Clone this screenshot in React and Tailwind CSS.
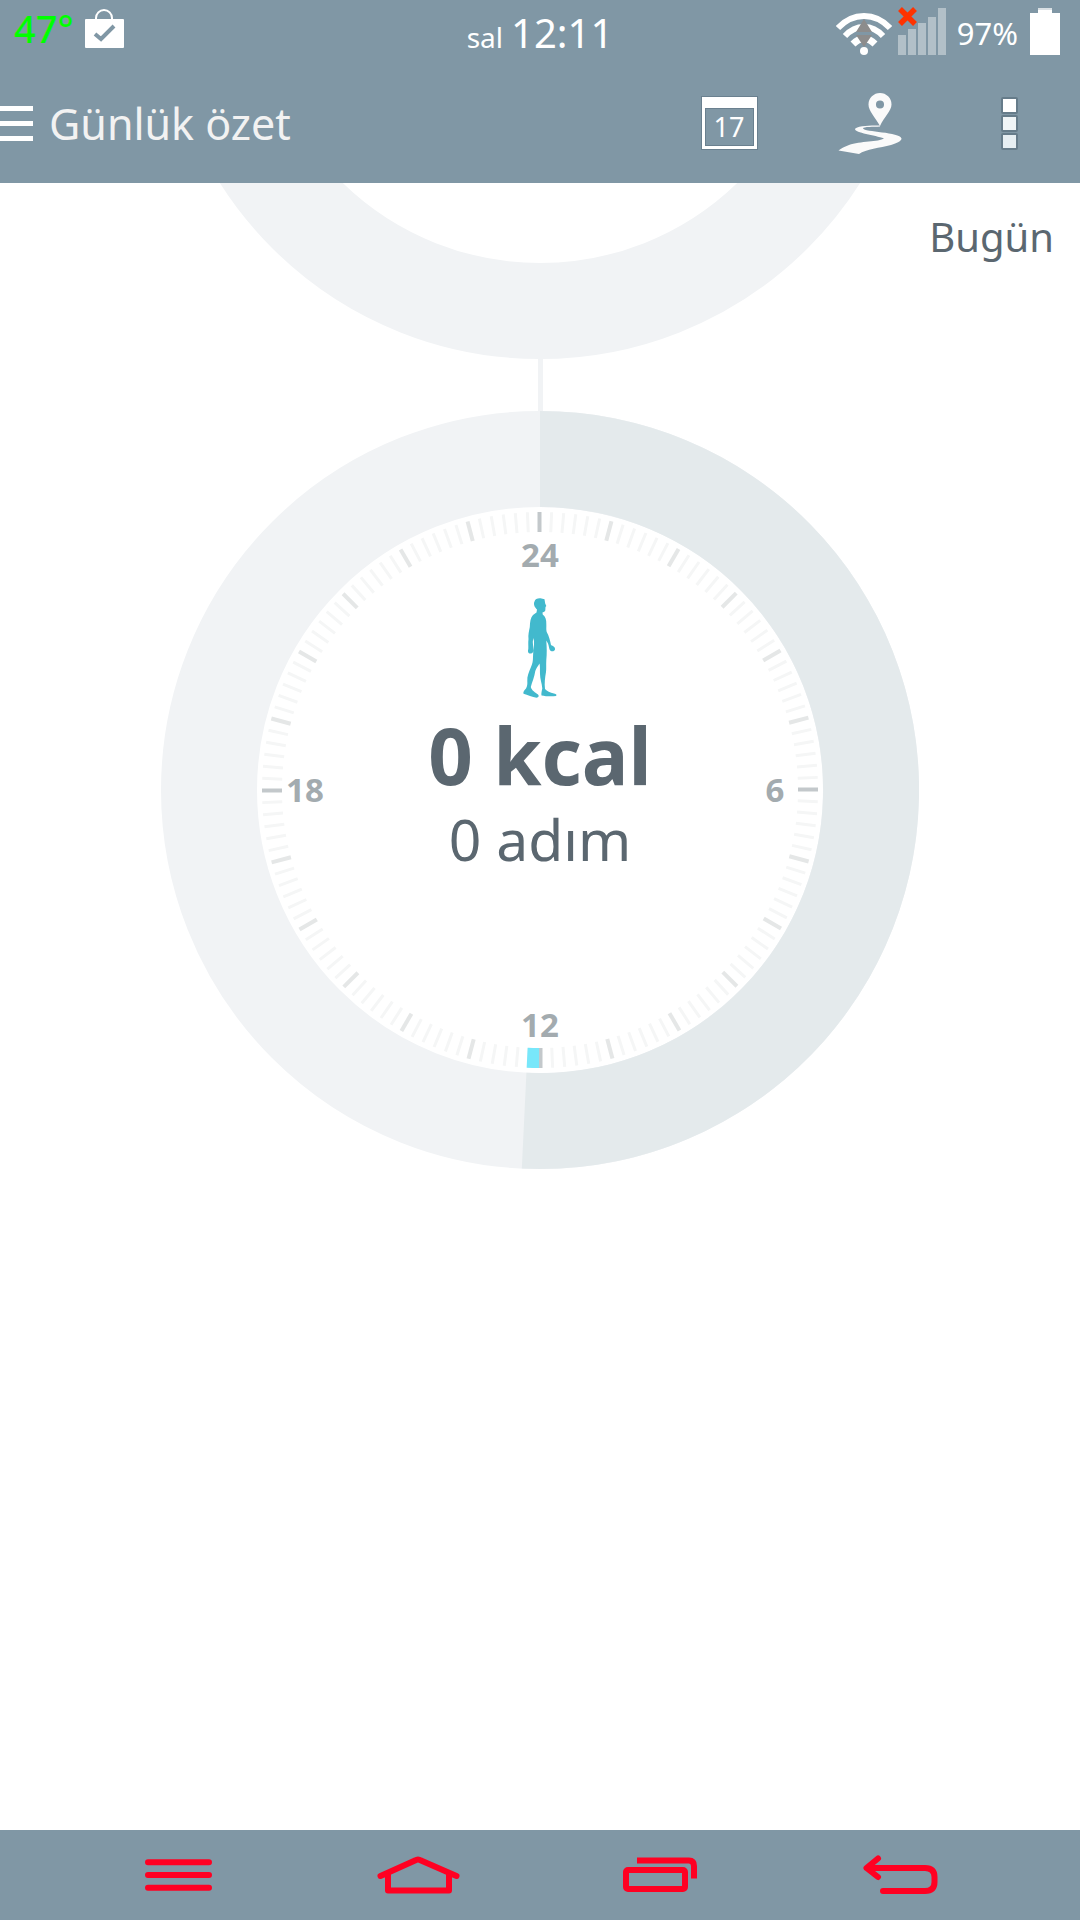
import React from 'react';

const RADIUS = 379;
const INNER = 283;
const ticks = Array.from({ length: 144 }, (_, i) => i);

const point = (radius, deg) => {
   const rad = (deg * Math.PI) / 180;
   return `${(379 + radius * Math.sin(rad)).toFixed(2)} ${(379 - radius * Math.cos(rad)).toFixed(2)}`;
};

// ring segment running clockwise between two angles, 0 is at the top
const segment = (outer, inner, from, to) => {
   const large = to - from > 180 ? 1 : 0;
   return `M${point(outer, from)} A${outer} ${outer} 0 ${large} 1 ${point(outer, to)} L${point(inner, to)} A${inner} ${inner} 0 ${large} 0 ${point(inner, from)} Z`;
};

const tickColor = (i) => {
   if (i % 36 === 0) return '#c3c8cb';
   if (i % 6 === 0) return '#e5e7e7';
   return '#f5f6f6';
};

const Walker = () => (
   <svg viewBox="0 0 80 130" className="h-[130px] w-20" fill="#42b9cd" aria-hidden="true">
      <path d="M34.500 21.500C35 19 37.500 18 40.500 18.200L44.500 19.300L45.200 23.500L46.300 26L45.500 27L45.300 30.500C44.500 32 43 32 42.500 32.500L42.700 34.500C45.500 36.500 46.500 40 46.300 43.500C46.500 47 46 49.500 46.700 52C49 56 50 60 51 65C53 66 55.500 67 55 69.500C54.500 71.700 51 72 49.800 70C48.800 67.500 49 66 48 63.500L46.300 60.500C46.800 67 47 74 46.300 80C46 85 46.500 88 46 92C45 98 44.300 103 45 109C47 111.500 50 112.500 54 113.500C56.500 114 57 115 56 116C52 116.600 46 116.400 41.500 115.500C41 113.500 41.800 111 42.300 108.500C41.800 103 40 99 40 94C39.800 90 40.300 87 39.500 83.500C38 86 36 88.500 35.300 91C34.500 97 32 102 30.800 107C31.500 110.500 35.500 112.500 38 114.500C39.300 115.800 38.800 117.500 36.500 117.700C32.500 117.500 27.500 114.500 23.500 113.800C22.800 112 24.500 110 26 108.500C27.300 106 27.500 104 27.300 101C27 96.500 28.800 92 31 87C32.500 83.500 33 81 33 77C33 71 34.300 66 34 61L33.200 58L32.800 62L33.300 69C33.800 72 32.500 73.700 30.500 73.500C28 73.500 27.600 71.500 28.300 69C28.500 66 28 63 28.500 59C28 55 29 51 29.800 47C30 42 30.500 37.500 33 35L36.500 32.500L37 29.500C35 27.500 33 24.500 34.500 21.500Z" />
   </svg>
);

const Dial = ({ progress, activeFrom, activeTo, children }) => (
   <section className="relative h-[758px] w-[758px] shrink-0">
      <svg viewBox="0 0 758 758" className="h-full w-full">
         <circle cx="379" cy="379" r={(RADIUS + INNER) / 2} fill="none" stroke="#f1f3f5" strokeWidth={RADIUS - INNER} />
         {progress && (
            <>
               <path d={segment(RADIUS, INNER, 0, progress)} fill="#e4eaec" />
               {ticks.map((i) => (
                  <line
                     key={i}
                     x1="378.500" y1="101" x2="378.500" y2="121"
                     stroke={tickColor(i)}
                     strokeWidth={i % 6 === 0 ? 4 : 3}
                     transform={`rotate(${i * 2.5} 379 379)`}
                  />
               ))}
               <path d={segment(278, 258, activeFrom, activeTo)} fill="#78e7fa" />
               <g fill="#a3abaf" className="font-['Noto_Sans'] text-[33px] font-bold" textAnchor="middle">
                  <text x="379" y="156">24</text>
                  <text x="614" y="391">6</text>
                  <text x="379" y="626">12</text>
                  <text x="144" y="391">18</text>
               </g>
            </>
         )}
      </svg>
      {children}
   </section>
);

const StatusBar = () => (
   <div className="grid h-[63px] grid-cols-[1fr_auto_1fr] items-start text-white">
      <div className="flex items-start gap-2 pl-[14px]">
         <span className="w-[62px] text-[38px] leading-[56px] font-medium text-[#00ff00]">47°</span>
         <svg viewBox="0 0 40 40" className="mt-[9px] h-10 w-10" fill="none">
            <path d="M12 11V9a8 8 0 0 1 16 0v2" stroke="#fff" strokeWidth="2" />
            <rect x="1" y="10" width="39" height="29" rx="1" fill="#fff" />
            <path d="M11 25l6 5 13-13" stroke="#8097a5" strokeWidth="4" />
         </svg>
      </div>
      <div className="flex items-baseline gap-2 leading-[66px]">
         <span className="text-[28px]">sal</span>
         <span className="text-[40px]">12:11</span>
      </div>
      <div className="flex items-start justify-end pr-5">
         <svg viewBox="0 0 56 56" className="h-14 w-14" fill="none">
            <path d="M2 28C17 12 39 12 54 28" stroke="#fff" strokeWidth="6" />
            <path d="M9 36C20 24 36 24 47 36" stroke="#fff" strokeWidth="6" />
            <path d="M17 44C24 37 32 37 39 44" stroke="#fff" strokeWidth="7" />
            <circle cx="28" cy="51" r="4" fill="#fff" />
            <path d="M20 32h16L28 19zM20 35h16L28 47z" fill="#8c8c8c" />
            <path d="M20 33.500h16" stroke="#8097a5" strokeWidth="3" />
         </svg>
         <svg viewBox="0 0 50 56" className="ml-[6px] h-14 w-[50px]">
            <g fill="#b2c0c8">
               <rect x="0" y="35" width="8" height="20" />
               <rect x="10" y="29" width="8" height="26" />
               <rect x="20" y="23" width="8" height="32" />
               <rect x="30" y="17" width="8" height="38" />
               <rect x="40" y="8" width="8" height="47" />
            </g>
            <path d="M2 9l15 15M17 9L2 24" stroke="#ff3300" strokeWidth="5.500" />
         </svg>
         <span className="ml-[9px] text-[31px] leading-[66px]">97%</span>
         <svg viewBox="0 0 30 56" className="ml-3 h-14 w-[30px]">
            <rect x="8" y="8" width="14" height="5" fill="#d9e0e4" />
            <rect x="0" y="13" width="30" height="42" fill="#fff" />
            <rect x="8" y="10" width="14" height="4" fill="#fff" />
         </svg>
      </div>
   </div>
);

const Header = () => (
   <header className="flex h-[120px] items-center text-[#f2f2f2]">
      <button aria-label="Menü" className="flex w-[33px] flex-col gap-[10px]">
         <span className="h-[5px] w-full bg-white" />
         <span className="h-[5px] w-full bg-white" />
         <span className="h-[5px] w-full bg-white" />
      </button>
      <h1 className="ml-4 flex-1 pt-[2px] text-[43px] leading-[60px]">Günlük özet</h1>
      <button aria-label="Takvim" className="h-[54px] w-[57px]">
         <svg viewBox="0 0 57 54" className="h-full w-full">
            <rect x="0.500" y="0.500" width="56" height="53" fill="#fff" stroke="#6a808f" strokeWidth="1" />
            <rect x="4.500" y="12.500" width="48" height="37" fill="#8097a5" stroke="#6a808f" />
            <text x="28" y="41" textAnchor="middle" fill="#fff" className="font-['Noto_Sans'] text-[27px]">17</text>
         </svg>
      </button>
      <button aria-label="Rota" className="ml-20 h-[62px] w-16">
         <svg viewBox="0 0 64 62" className="h-full w-full" fill="#fafafa">
            <path d="M42 34C37 25 30.500 19 30.500 12.500a11.500 11.500 0 0 1 23 0C53.500 19 46 25 42 34ZM42 8.500a4 4 0 1 0 0 8.100a4 4 0 1 0 0-8.100Z" fillRule="evenodd" />
            <path d="M42 33.500C33 33 18 34 17 37C17 41 37 43 46 46.500C41 50 22 49 11 53C7 54.500 3 56.500 0.500 58.500L21 62C28 57 42 56 53 53C59 51 63.500 49 63.500 46.500C62 40 26 40 25 36.500C25 34.500 36 35 42 34.500Z" />
         </svg>
      </button>
      <button aria-label="Diğer seçenekler" className="mr-[61px] ml-[99px] flex w-[18px] flex-col gap-px">
         <span className="h-[17px] w-[17px] rounded-[2px] border-2 border-[#667c8a] bg-white" />
         <span className="h-[17px] w-[17px] rounded-[2px] border-2 border-[#667c8a] bg-[#eff4f6]" />
         <span className="h-[17px] w-[17px] rounded-[2px] border-2 border-[#667c8a] bg-[#e6eef2]" />
      </button>
   </header>
);

const NavButton = ({ label, children }) => (
   <button aria-label={label} className="flex flex-1 items-center justify-center">
      <svg viewBox="0 0 90 60" className="h-[60px] w-[90px]" fill="none" stroke="#ff0022" strokeWidth="6" strokeLinecap="round" strokeLinejoin="round">
         {children}
      </svg>
   </button>
);

const NavBar = () => (
   <nav className="flex h-[90px] bg-[#8097a5] px-[58px]">
      <NavButton label="Menü">
         <path d="M14 17.300h61M14 30h61M14 42.700h61" />
      </NavButton>
      <NavButton label="Ana ekran">
         <path d="M5.500 31L40 15.500Q43 13.500 46 15.500L81.500 31M13 29V45.500H74V29" />
      </NavButton>
      <NavButton label="Son uygulamalar">
         <rect x="10" y="25" width="59" height="19" rx="2" />
         <path d="M21 15.500H73Q78 15.500 78 21V33.500" strokeLinecap="butt" />
      </NavButton>
      <NavButton label="Geri">
         <path d="M21 13.500L9.500 23L21 32M10 23H68Q77.500 23 77.500 32V37Q77.500 46 68 46H26" />
      </NavButton>
   </nav>
);

const App = () => {
   return (
      <div className="flex min-h-screen flex-col bg-white font-['Noto_Sans',sans-serif]">
         <div className="bg-[#8097a5]">
            <StatusBar />
            <Header />
         </div>

         <main className="relative flex-1 overflow-hidden text-[#5b6770]">
            <div className="-mt-[582px] flex flex-col items-center">
               <Dial />
               <div className="h-[52px] w-[5px] bg-[#f1f3f5]" />
               <Dial progress={182.75} activeFrom={180.2} activeTo={182.75}>
                  <div className="absolute inset-0 flex flex-col items-center pt-[169px]">
                     <Walker />
                     <p className="text-[78px] leading-[90px] font-bold">0 kcal</p>
                     <p className="text-[57px] leading-[78px]">0 adım</p>
                  </div>
               </Dial>
            </div>
            <h2 className="absolute top-[26px] right-[26px] text-[40px] leading-[56px]">Bugün</h2>
         </main>

         <NavBar />
      </div>
   );
};

export default App;
